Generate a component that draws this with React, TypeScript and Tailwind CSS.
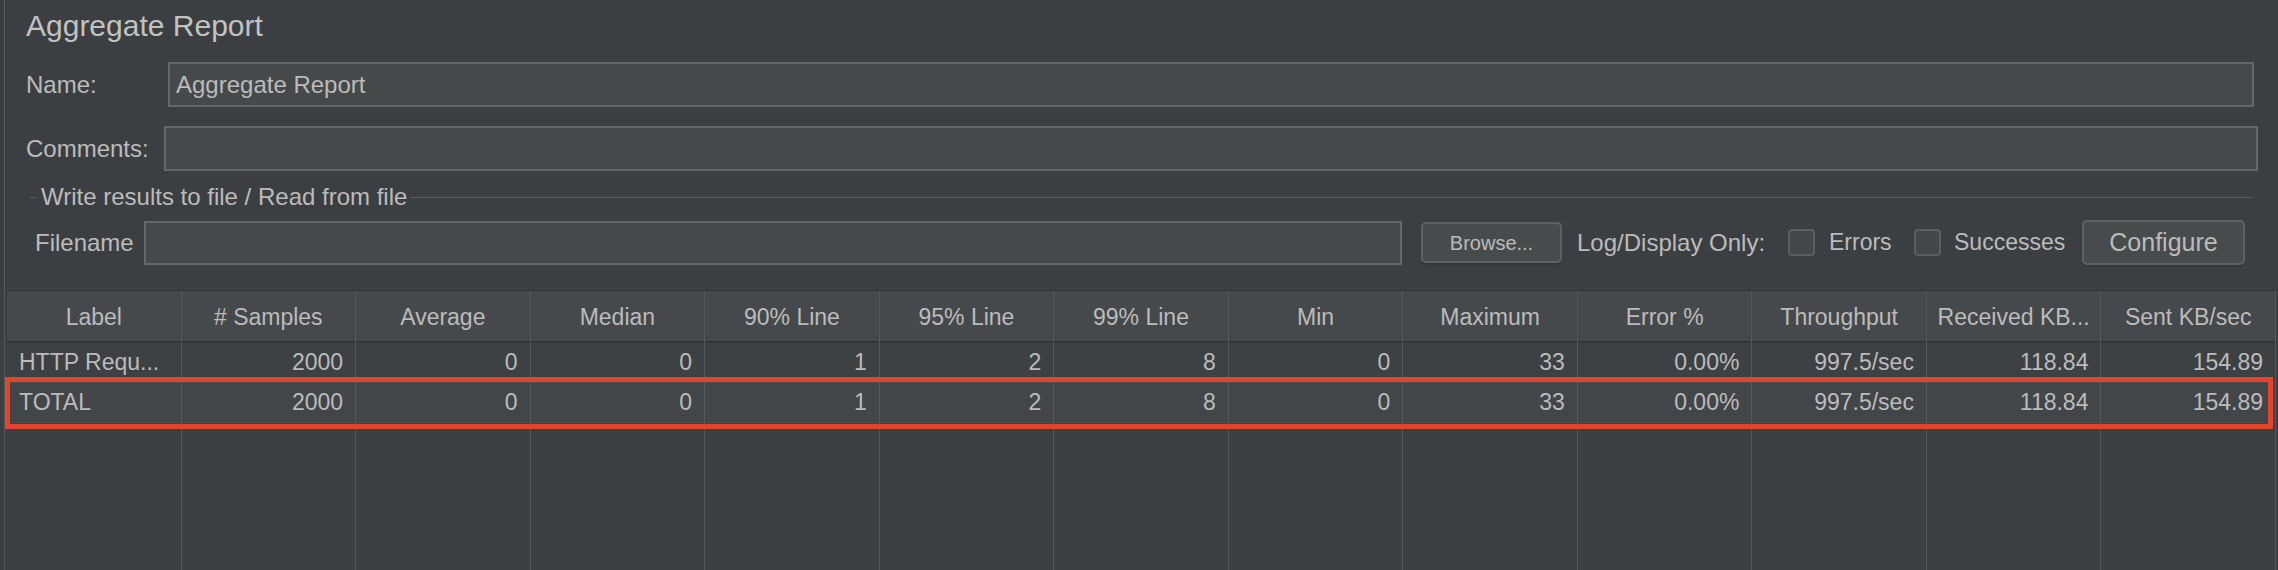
const columns = [
  "Label",
  "# Samples",
  "Average",
  "Median",
  "90% Line",
  "95% Line",
  "99% Line",
  "Min",
  "Maximum",
  "Error %",
  "Throughput",
  "Received KB...",
  "Sent KB/sec",
];

const rows = [
  ["HTTP Requ...", "2000", "0", "0", "1", "2", "8", "0", "33", "0.00%", "997.5/sec", "118.84", "154.89"],
  ["TOTAL", "2000", "0", "0", "1", "2", "8", "0", "33", "0.00%", "997.5/sec", "118.84", "154.89"],
];

function Checkbox() {
  return <div className="w-[27px] h-[27px] shrink-0 rounded-[4px] border-2 border-[#5c5f61] bg-[#43474a]" />;
}

export default function App() {
  return (
    <div className="relative w-[2278px] h-[570px] overflow-hidden bg-[#3c3f41] pl-[4px] font-['Liberation_Sans',Arial,sans-serif] text-[#bbbbbb]">
      <div className="flex h-full flex-col border-l border-[#56595b]">
        {/* Title */}
        <div className="mt-[9px] h-[34px] pl-[21px] text-[30px] leading-[34px] text-[#c2c2c2]">Aggregate Report</div>

        {/* Name */}
        <div className="mt-[19px] flex h-[45px] items-center pl-[21px] pr-[24px]">
          <span className="w-[142px] shrink-0 text-[24px]">Name:</span>
          <div className="flex h-full flex-1 items-center border-2 border-[#646769] bg-[#45494a] pl-[6px] text-[24px]">
            Aggregate Report
          </div>
        </div>

        {/* Comments */}
        <div className="mt-[19px] flex h-[45px] items-center pl-[21px] pr-[20px]">
          <span className="w-[138px] shrink-0 text-[24px]">Comments:</span>
          <div className="h-full flex-1 border-2 border-[#646769] bg-[#45494a]" />
        </div>

        {/* File group */}
        <div className="mt-[14px] flex h-[24px] items-center pl-[25px] pr-[25px]">
          <div className="h-px w-[5px] bg-[#5b5e60]" />
          <span className="ml-[6px] text-[24px] leading-[24px]">Write results to file / Read from file</span>
          <div className="ml-[3px] h-px flex-1 bg-[#5b5e60]" />
        </div>

        <div className="mt-[11px] flex h-[45px] items-center pl-[30px] pr-[33px] text-[24px]">
          <span className="w-[109px] shrink-0">Filename</span>
          <div className="h-[44px] flex-1 border-2 border-[#646769] bg-[#45494a]" />
          <button className="ml-[19px] h-[41px] w-[141px] shrink-0 rounded-[5px] border-2 border-[#5e6163] bg-[#474b4c] text-[20px] text-[#bbbbbb] shadow-[0_2px_0_#353739]">
            Browse...
          </button>
          <span className="ml-[15px] w-[211px] shrink-0">Log/Display Only:</span>
          <Checkbox />
          <span className="ml-[14px] w-[85px] shrink-0 text-[23px]">Errors</span>
          <Checkbox />
          <span className="ml-[13px] w-[128px] shrink-0 text-[23px]">Successes</span>
          <button className="h-[45px] w-[163px] shrink-0 rounded-[5px] border-2 border-[#5e6163] bg-[#474b4c] text-[25px] text-[#bbbbbb] shadow-[0_2px_0_#353739]">
            Configure
          </button>
        </div>

        {/* Table */}
        <div className="ml-[2px] mr-[2px] mt-[25px] grid flex-1 grid-cols-[repeat(13,minmax(0,1fr))] border-t border-[#333537] text-[23px]">
          {columns.map((col, ci) => (
            <div key={col} className="flex flex-col border-r border-[#55585a]">
              <div className="flex h-[52px] shrink-0 items-center justify-center border-b-2 border-[#333537] bg-[#46494b] pt-[2px] whitespace-nowrap">
                {col}
              </div>
              {rows.map((row, ri) => (
                <div
                  key={ri}
                  className={`flex h-[40px] shrink-0 items-center border-b border-[#4b4e50] px-[12px] whitespace-nowrap ${
                    ci === 0 ? "justify-start" : "justify-end"
                  } ${ri === 1 ? "bg-[#434648]" : "bg-[#3e4143]"}`}
                >
                  {row[ci]}
                </div>
              ))}
              <div className="flex-1 bg-[#3d4042]" />
            </div>
          ))}
        </div>
      </div>

      {/* Highlight annotation */}
      <div className="absolute left-[5px] top-[377px] h-[52px] w-[2268px] border-[5px] border-[#e5442c]" />
    </div>
  );
}
